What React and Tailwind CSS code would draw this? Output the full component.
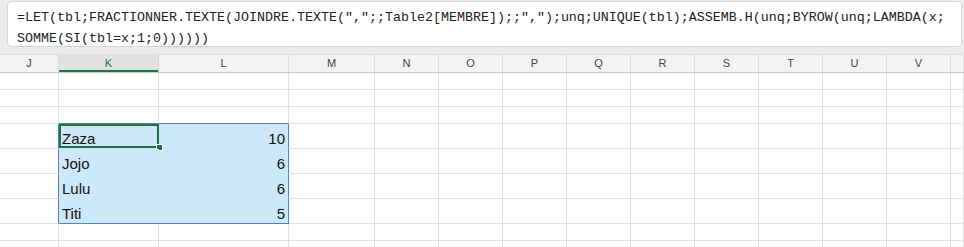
import React from "react";

const cols = ["J", "K", "L", "M", "N", "O", "P", "Q", "R", "S", "T", "U", "V", ""];
const colTpl = "grid-cols-[59px_100px_130px_86px_64px_64px_64px_64px_64px_64px_64px_64px_64px_1fr]";
const data = [
  ["Zaza", "10"],
  ["Jojo", "6"],
  ["Lulu", "6"],
  ["Titi", "5"],
];

function EmptyCell({ cls = "border-[#e1e1e1]", h = "h-[17px]" }) {
  return <div className={`${h} border-r border-b ${cls}`} />;
}

export default function App() {
  const rows = [];
  for (let r = 0; r < 3; r++) {
    cols.forEach((c, i) => {
      const blueBottom = r === 2 && (i === 1 || i === 2);
      rows.push(
        <div
          key={`e${r}-${i}`}
          className={`h-[17px] border-r border-b border-r-[#e1e1e1] ${blueBottom ? "border-b-[#4f81bd]" : "border-b-[#e1e1e1]"}`}
        />
      );
    });
  }
  data.forEach(([name, val], r) => {
    const last = r === data.length - 1;
    cols.forEach((c, i) => {
      if (i === 1) {
        rows.push(
          <div
            key={`d${r}-${i}`}
            className={`relative h-[25px] bg-[#cde8f9] border-b flex items-end pl-[3px] pb-[1px] text-[15px] leading-[17px] text-[#111] ${last ? "border-b-[#4f81bd]" : "border-b-[#cde8f9]"} ${r === 0 ? "shadow-[inset_0_0_0_2px_#217346]" : ""}`}
          >
            {name}
            {r === 0 && (
              <span className="absolute right-[-3px] bottom-[-2px] w-[5px] h-[5px] bg-[#217346] outline outline-1 outline-white" />
            )}
          </div>
        );
      } else if (i === 2) {
        rows.push(
          <div
            key={`d${r}-${i}`}
            className={`h-[25px] bg-[#cde8f9] border-r border-b border-r-[#4f81bd] flex items-end justify-end pr-[3px] pb-[1px] text-[15px] leading-[17px] text-[#111] ${last ? "border-b-[#4f81bd]" : "border-b-[#cde8f9]"}`}
          >
            {val}
          </div>
        );
      } else {
        rows.push(
          <div
            key={`d${r}-${i}`}
            className={`h-[25px] border-r border-b border-b-[#e1e1e1] ${i === 0 ? "border-r-[#4f81bd]" : "border-r-[#e1e1e1]"}`}
          />
        );
      }
    });
  });
  for (let r = 0; r < 2; r++) {
    cols.forEach((c, i) => {
      rows.push(<EmptyCell key={`f${r}-${i}`} />);
    });
  }

  return (
    <div className="w-[964px] h-[247px] overflow-hidden bg-white font-['Liberation_Sans',sans-serif]">
      {/* formula bar */}
      <div className="bg-[#ececec] pt-[1px] pl-[7px] pr-[2px] h-[55px] border-b border-[#e0e0e0]">
        <div className="h-[46px] bg-white rounded-[4px] border border-[#d6d6d6] pl-[9px] pt-[5px] font-['Liberation_Mono',monospace] text-[13.33px] leading-[21px] text-[#222] whitespace-pre">
          <div>=LET(tbl;FRACTIONNER.TEXTE(JOINDRE.TEXTE(",";;Table2[MEMBRE]);;",");unq;UNIQUE(tbl);ASSEMB.H(unq;BYROW(unq;LAMBDA(x;</div>
          <div>SOMME(SI(tbl=x;1;0))))))</div>
        </div>
      </div>
      {/* column headers */}
      <div className={`grid ${colTpl} h-[18px] bg-[#f3f3f3] border-b border-[#c8c8c8]`}>
        {cols.map((c, i) => (
          <div
            key={c + i}
            className={
              i === 1
                ? "bg-[#e1e1e1] border-r border-[#d4d4d4] shadow-[inset_0_-2px_0_#217346] flex items-center justify-center text-[11px] text-[#217346]"
                : "border-r border-[#dcdcdc] flex items-center justify-center text-[11px] text-[#444]"
            }
          >
            {c}
          </div>
        ))}
      </div>
      {/* grid */}
      <div className={`grid ${colTpl}`}>{rows}</div>
    </div>
  );
}
